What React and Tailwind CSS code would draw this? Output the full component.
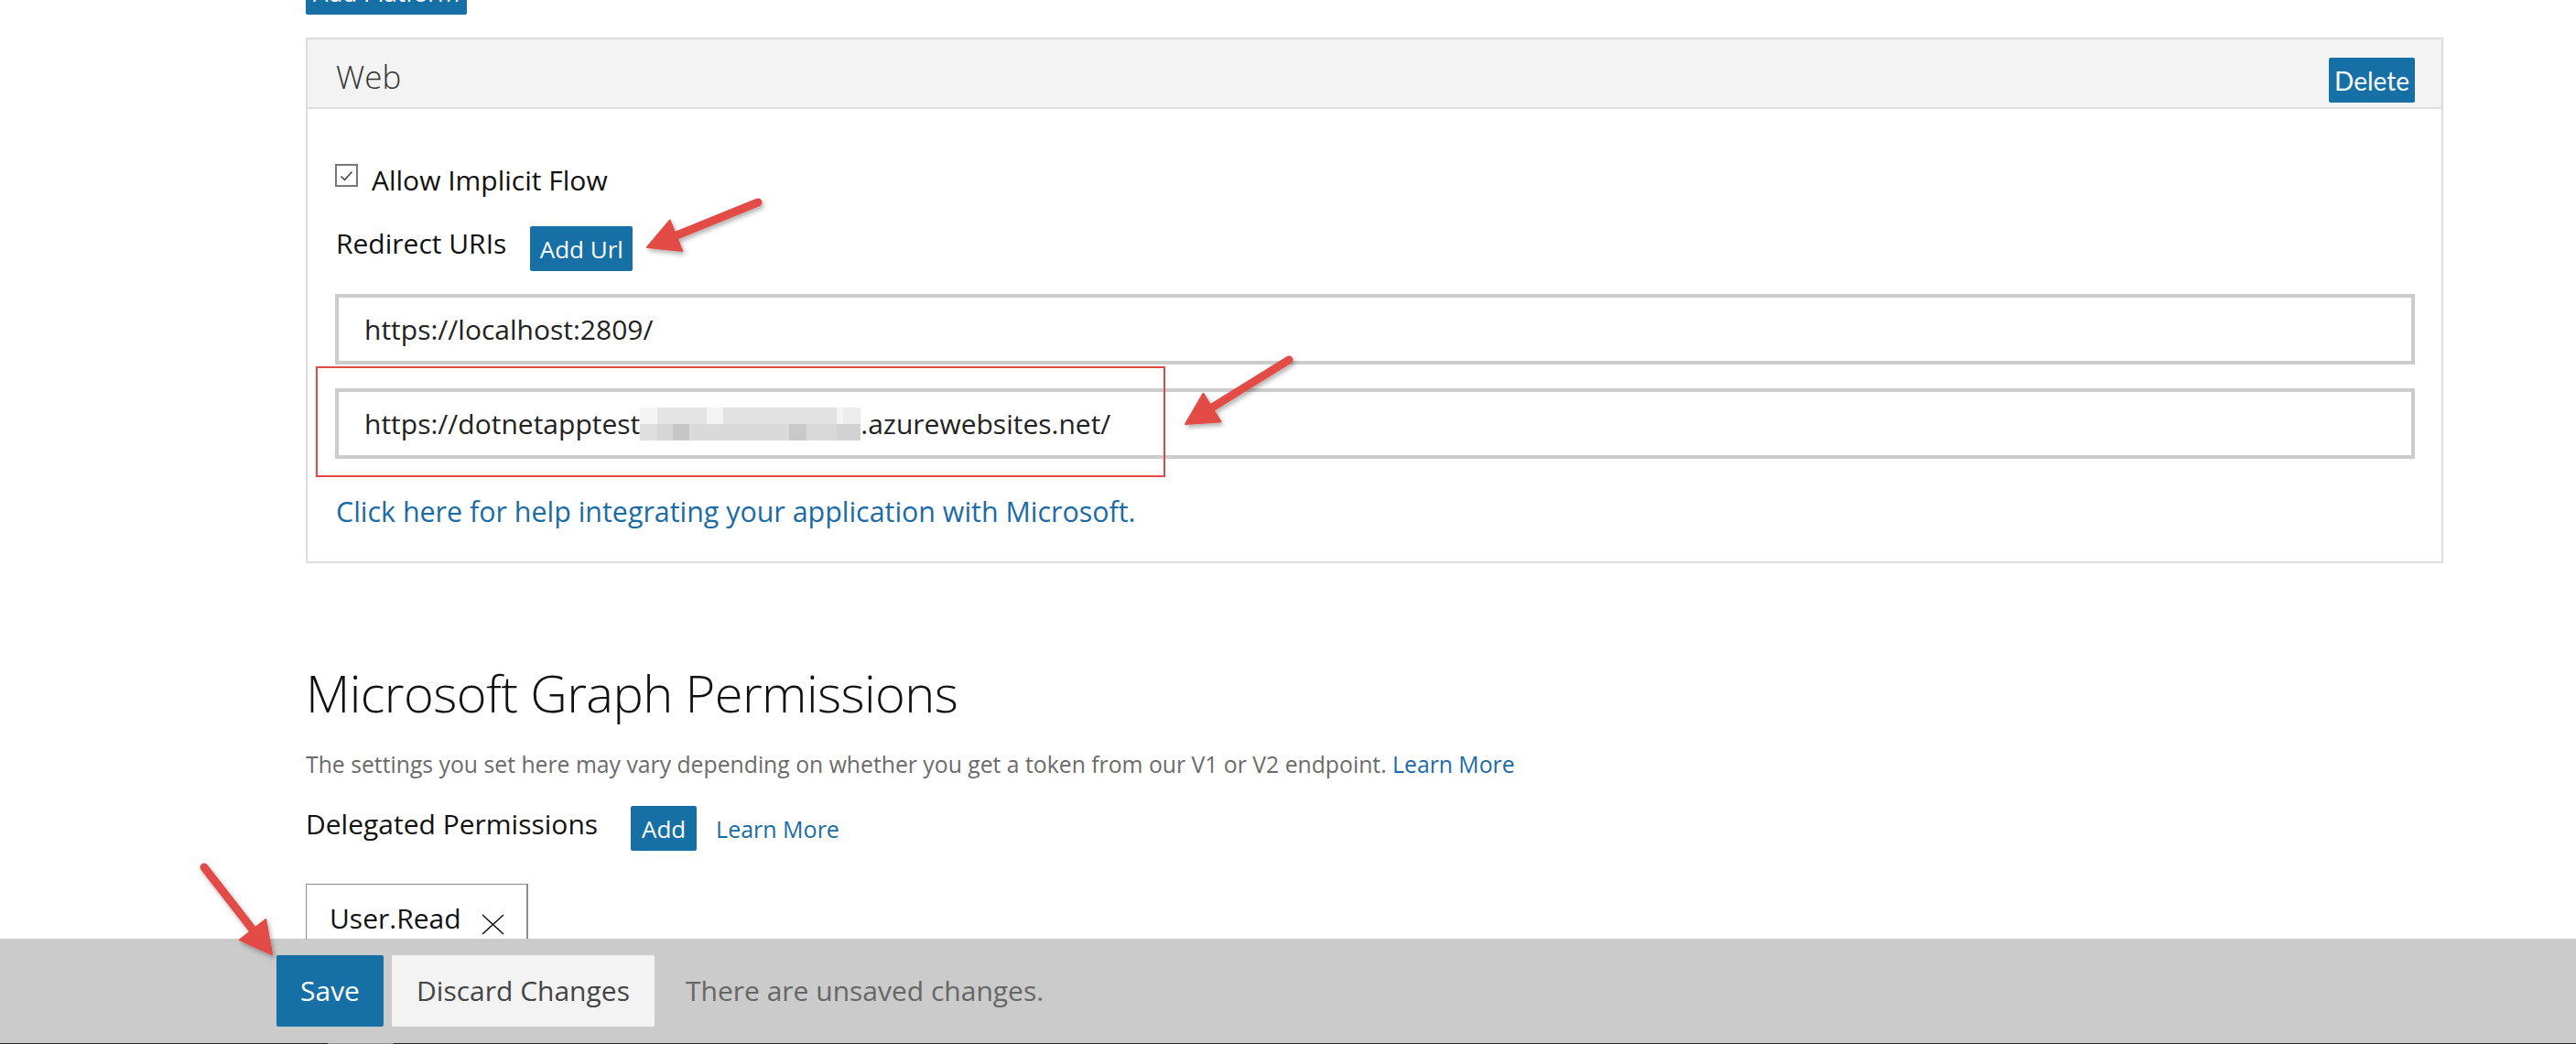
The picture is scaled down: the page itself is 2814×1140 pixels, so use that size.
import React from 'react';

const BLUE = 'bg-[#1670a6]';

// pixelated blur patch inside the second redirect uri
const MOSAIC_TOP = [
  'w-[19px] bg-[#f3f3f3]',
  'w-[54px] bg-[#e4e4e4]',
  'w-[18px] bg-[#f3f3f3]',
  'w-[124px] bg-[#e2e2e2]',
  'w-[7px] bg-[#f4f4f4]',
  'w-[19px] bg-[#ececec]',
];
const MOSAIC_BOTTOM = [
  'w-[19px] bg-[#dedede]',
  'w-[17px] bg-[#d6d6d6]',
  'w-[18px] bg-[#c6c6c6]',
  'w-[109px] bg-[#dadada]',
  'w-[19px] bg-[#c9c9c9]',
  'w-[33px] bg-[#d9d9d9]',
  'w-[26px] bg-[#d2d2d2]',
];

const arrowShape = (x1, y1, x2, y2) => {
  const dx = x2 - x1;
  const dy = y2 - y1;
  const len = Math.hypot(dx, dy);
  const ux = dx / len;
  const uy = dy / len;
  const hl = 34;
  const hw = 18;
  const bx = x2 - ux * hl;
  const by = y2 - uy * hl;
  return {
    line: { x1, y1, x2: bx + ux * 6, y2: by + uy * 6 },
    head: `${x2},${y2} ${bx - uy * hw},${by + ux * hw} ${bx + uy * hw},${by - ux * hw}`,
  };
};

const ARROWS = [
  [828, 221, 707, 270],
  [1408, 393, 1295, 463],
  [223, 947, 297, 1042],
].map((a) => arrowShape(...a));

const Annotations = () => (
  <svg
    className="absolute left-0 top-0 pointer-events-none"
    width="2814"
    height="1140"
    viewBox="0 0 2814 1140"
  >
    <defs>
      <filter id="arrowShadow" x="-20%" y="-20%" width="140%" height="140%">
        <feDropShadow dx="2" dy="3" stdDeviation="2.5" floodColor="#000" floodOpacity="0.3" />
      </filter>
    </defs>
    {ARROWS.map((a, i) => (
      <g key={i} filter="url(#arrowShadow)" fill="#e34b46" stroke="#e34b46">
        <line {...a.line} strokeWidth="9" strokeLinecap="round" />
        <polygon points={a.head} strokeWidth="2" strokeLinejoin="round" />
      </g>
    ))}
  </svg>
);

const BlueButton = ({ children, className = '' }) => (
  <button
    className={`${BLUE} text-white rounded-[2px] flex items-center justify-center text-[26px] leading-none ${className}`}
  >
    {children}
  </button>
);

const UriInput = ({ children }) => (
  <div className="h-[77px] border-4 border-[#cccccc] bg-white flex items-center pl-[28px] text-[30px] leading-none text-[#222]">
    {children}
  </div>
);

export default function App() {
  return (
    <div className="relative w-[2814px] h-[1140px] overflow-hidden bg-white flex flex-col font-['Open_Sans','Noto_Sans',sans-serif]">
      <main className="flex-1 overflow-hidden pl-[334px] pr-[145px]">
        <BlueButton className="-mt-[33px] h-[49px] w-[176px]">Add Platform</BlueButton>

        {/* Web platform card */}
        <section className="mt-[25px] border-2 border-[#dddddd]">
          <header className="h-[76px] bg-[#f3f3f3] border-b-2 border-[#dddddd] flex items-start justify-between pl-[31px] pr-[29px] pt-[20px]">
            <h3 className="mt-[3px] text-[35px] leading-none font-light text-[#333]">Web</h3>
            <BlueButton className="h-[49px] w-[94px] text-[28px] font-['Lato',sans-serif]">Delete</BlueButton>
          </header>

          <div className="pl-[30px] pr-[29px] pt-[60px] pb-[39px]">
            <label className="flex items-start h-[25px]">
              <span className="w-[25px] h-[25px] border-2 border-[#777] flex items-center justify-center">
                <svg width="15" height="12" viewBox="0 0 15 12">
                  <path d="M1.5 6.5 L5.5 10.5 L13.5 1.5" fill="none" stroke="#333" strokeWidth="1.4" />
                </svg>
              </span>
              <span className="ml-[15px] mt-[3px] text-[30px] leading-none text-[#111]">Allow Implicit Flow</span>
            </label>

            <div className="mt-[43px] flex items-start gap-[26px] pl-[1px]">
              <span className="mt-[4px] text-[30px] leading-none text-[#111]">Redirect URIs</span>
              <BlueButton className="h-[49px] w-[112px]">Add Url</BlueButton>
            </div>

            <div className="mt-[25px]">
              <UriInput>https://localhost:2809/</UriInput>
            </div>

            <div className="relative mt-[26px]">
              <UriInput>
                <span>https://dotnetapptest</span>
                <span className="inline-flex flex-col w-[241px] h-[36px]">
                  <span className="flex h-[18px]">
                    {MOSAIC_TOP.map((c, i) => (
                      <span key={i} className={`h-full ${c}`} />
                    ))}
                  </span>
                  <span className="flex h-[18px]">
                    {MOSAIC_BOTTOM.map((c, i) => (
                      <span key={i} className={`h-full ${c}`} />
                    ))}
                  </span>
                </span>
                <span>.azurewebsites.net/</span>
              </UriInput>
              <div className="absolute -left-[21px] -top-[24px] w-[928px] h-[121px] border-2 border-[#e04a46] pointer-events-none" />
            </div>

            <a className="block mt-[43px] pl-[1px] text-[30.4px] leading-none text-[#1a6ba6]">
              Click here for help integrating your application with Microsoft.
            </a>
          </div>
        </section>

        {/* Graph permissions */}
        <h2 className="mt-[113px] text-[56px] tracking-[-0.6px] leading-none font-light text-[#111]">
          Microsoft Graph Permissions
        </h2>
        <p className="mt-[39px] text-[24.75px] leading-none text-[#6b6b6b]">
          The settings you set here may vary depending on whether you get a token from our V1 or V2 endpoint.{' '}
          <a className="text-[#1a6ba6]">Learn More</a>
        </p>

        <div className="mt-[32px] flex items-start">
          <span className="mt-[5px] text-[30px] leading-none text-[#111]">Delegated Permissions</span>
          <BlueButton className="ml-[36px] h-[49px] w-[72px]">Add</BlueButton>
          <a className="ml-[21px] mt-[13px] text-[25px] leading-none text-[#1a6ba6]">Learn More</a>
        </div>

        <div className="mt-[36px] inline-flex items-start border border-[#8c8c8c] border-r-2 pl-[25px] pr-[24px] pt-[22px] h-[120px]">
          <span className="text-[30px] leading-none text-[#111]">User.Read</span>
          <svg className="ml-[22px] mt-[10px]" width="25" height="23" viewBox="0 0 25 23">
            <path d="M1 1 L24 22 M24 1 L1 22" stroke="#111" strokeWidth="1.5" fill="none" />
          </svg>
        </div>
      </main>

      {/* unsaved changes bar */}
      <footer className="h-[115px] shrink-0 bg-[#cbcbcb] flex flex-col">
        <div className="flex-1 flex items-start pl-[302px] pt-[18px]">
          <button className={`${BLUE} h-[78px] w-[117px] rounded-[2px] text-white text-[30px] leading-none`}>Save</button>
          <button className="ml-[9px] h-[78px] w-[287px] rounded-[2px] bg-[#f3f3f3] text-[#444] text-[30px] leading-none">
            Discard Changes
          </button>
          <span className="ml-[34px] mt-[24px] text-[30px] leading-none text-[#666]">There are unsaved changes.</span>
        </div>
        <div className="h-[1px] flex bg-[#222]">
          <div className="ml-[358px] w-[72px] bg-[#8f8f8f]" />
        </div>
      </footer>

      <Annotations />
    </div>
  );
}
